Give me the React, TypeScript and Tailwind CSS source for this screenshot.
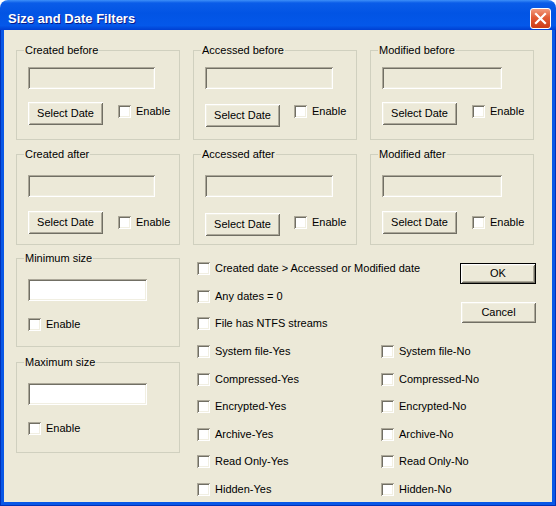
import type { ReactNode } from "react";

const sunken =
  "shadow-[inset_1px_1px_0_#aca899,inset_-1px_-1px_0_#ffffff,inset_2px_2px_0_#716f64,inset_-2px_-2px_0_#f1efe2]";
const raised =
  "shadow-[inset_1px_1px_0_#ffffff,inset_-1px_-1px_0_#716f64,inset_2px_2px_0_#f1efe2,inset_-2px_-2px_0_#aca899]";

function Check({ label }: { label: string }) {
  return (
    <label className="flex items-center gap-[5px] text-[11px] leading-[13px] whitespace-nowrap">
      <span className={`w-[13px] h-[13px] shrink-0 bg-white ${sunken}`} />
      <span>{label}</span>
    </label>
  );
}

function Btn({ className, children }: { className: string; children: ReactNode }) {
  return (
    <button
      className={`flex items-center justify-center bg-[#ece9d8] text-[11px] leading-[13px] text-black ${raised} ${className}`}
    >
      {children}
    </button>
  );
}

function Group({ title, className, children }: { title: string; className: string; children: ReactNode }) {
  return (
    <fieldset className={`w-[164px] border border-[#d0d0bf] ${className}`}>
      <legend className="ml-[7px] px-[1px] text-[11px] leading-[13px]">{title}</legend>
      {children}
    </fieldset>
  );
}

type DateProps = {
  title: string;
  fieldW: string;
  fieldMt: string;
  rowMt: string;
  btnMt: string;
  checkMt: string;
  checkMl: string;
  h: string;
};

function DateGroup(p: DateProps) {
  return (
    <Group title={p.title} className={p.h}>
      <div className="pl-[11px]">
        <div className={`h-[22px] bg-[#ece9d8] ${sunken} ${p.fieldW} ${p.fieldMt}`} />
        <div className={`flex items-start ${p.rowMt}`}>
          <Btn className={`w-[75px] h-[23px] ${p.btnMt}`}>Select Date</Btn>
          <div className={`${p.checkMl} ${p.checkMt}`}>
            <Check label="Enable" />
          </div>
        </div>
      </div>
    </Group>
  );
}

function SizeGroup({ title, className }: { title: string; className: string }) {
  return (
    <Group title={title} className={className}>
      <div className="pl-[11px]">
        <div className={`mt-[14px] w-[119px] h-[22px] bg-white ${sunken}`} />
        <div className="mt-[17px]">
          <Check label="Enable" />
        </div>
      </div>
    </Group>
  );
}

export default function App() {
  const pairs = [
    ["System file-Yes", "System file-No"],
    ["Compressed-Yes", "Compressed-No"],
    ["Encrypted-Yes", "Encrypted-No"],
    ["Archive-Yes", "Archive-No"],
    ["Read Only-Yes", "Read Only-No"],
    ["Hidden-Yes", "Hidden-No"],
  ];

  return (
    <div className="w-[556px] h-[506px] flex flex-col bg-white font-['Liberation_Sans',Arial,sans-serif] text-black">
      {/* title bar */}
      <div className="h-[30px] shrink-0 flex items-center pt-[7px] pl-[8px] pr-[5px] rounded-t-[8px] bg-[linear-gradient(180deg,#3d8ff8_0%,#0a5ce8_10%,#0254e4_45%,#0458ea_85%,#003fd2_100%)]">
        <span className="text-[13px] leading-[15px] font-bold text-white [text-shadow:1px_1px_#0a1a8a]">
          Size and Date Filters
        </span>
        <span className="ml-auto w-[21px] h-[21px] rounded-[3px] border border-white bg-[linear-gradient(180deg,#f29a7c_0%,#e15b35_45%,#cd3c16_100%)] flex items-center justify-center">
          <svg width="19" height="19" viewBox="0 0 19 19">
            <path d="M5 5L14 14M14 5L5 14" stroke="white" strokeWidth="2.2" strokeLinecap="square" />
          </svg>
        </span>
      </div>

      {/* body */}
      <div className="flex-1 flex bg-[#0857e6] px-[4px] pb-[4px] shadow-[inset_1px_0_0_#0031b8,inset_-1px_0_0_#0031b8,inset_0_-1px_0_#0031b8]">
        <div className="flex-1 bg-[#ece9d8] pl-[12px] pt-[14px]">
          <div className="flex gap-[13px]">
            <DateGroup title="Created before" h="h-[96px]" fieldW="w-[127px]" fieldMt="mt-[10px]" rowMt="mt-[13px]" btnMt="mt-0" checkMt="mt-[3px]" checkMl="ml-[15px]" />
            <DateGroup title="Accessed before" h="h-[96px]" fieldW="w-[128px]" fieldMt="mt-[10px]" rowMt="mt-[13px]" btnMt="mt-[2px]" checkMt="mt-[3px]" checkMl="ml-[14px]" />
            <DateGroup title="Modified before" h="h-[96px]" fieldW="w-[120px]" fieldMt="mt-[10px]" rowMt="mt-[13px]" btnMt="mt-0" checkMt="mt-[3px]" checkMl="ml-[15px]" />
          </div>
          <div className="flex gap-[13px] mt-[8px]">
            <DateGroup title="Created after" h="h-[97px]" fieldW="w-[127px]" fieldMt="mt-[14px]" rowMt="mt-[14px]" btnMt="mt-0" checkMt="mt-[5px]" checkMl="ml-[15px]" />
            <DateGroup title="Accessed after" h="h-[97px]" fieldW="w-[128px]" fieldMt="mt-[14px]" rowMt="mt-[14px]" btnMt="mt-[2px]" checkMt="mt-[5px]" checkMl="ml-[14px]" />
            <DateGroup title="Modified after" h="h-[97px]" fieldW="w-[120px]" fieldMt="mt-[14px]" rowMt="mt-[14px]" btnMt="mt-0" checkMt="mt-[5px]" checkMl="ml-[15px]" />
          </div>

          <div className="flex gap-[13px] mt-[7px]">
            <div className="flex flex-col">
              <SizeGroup title="Minimum size" className="h-[95px]" />
              <SizeGroup title="Maximum size" className="h-[97px] mt-[9px]" />
            </div>

            <div className="flex-1 pl-[4px] pt-[10px] pr-[16px]">
              <div className="flex justify-between">
                <div className="flex flex-col gap-[14.625px]">
                  <Check label="Created date > Accessed or Modified date" />
                  <Check label="Any dates = 0" />
                  <Check label="File has NTFS streams" />
                </div>
                <div className="flex flex-col items-end">
                  <button className="mt-[1px] w-[76px] h-[21px] border border-black">
                    <span className={`flex h-full items-center justify-center bg-[#ece9d8] text-[11px] leading-[13px] ${raised}`}>
                      OK
                    </span>
                  </button>
                  <Btn className="mt-[18px] w-[75px] h-[21px]">Cancel</Btn>
                </div>
              </div>
              <div className="grid grid-cols-[184px_1fr] gap-y-[14.625px] mt-[14.625px]">
                {pairs.map(([a, b]) => (
                  <div key={a} className="contents">
                    <Check label={a} />
                    <Check label={b} />
                  </div>
                ))}
              </div>
            </div>
          </div>
        </div>
      </div>
    </div>
  );
}
